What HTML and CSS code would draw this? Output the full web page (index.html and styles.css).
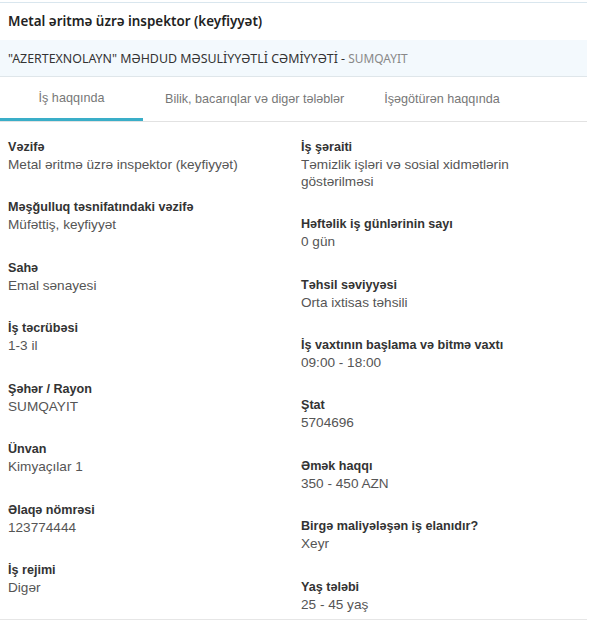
FILE: index.html
```html
<!DOCTYPE html>
<html lang="az">
<head>
<meta charset="utf-8">
<link rel="stylesheet" href="styles.css">
</head>
<body>
<div class="card">
  <div class="title">Metal əritmə üzrə inspektor (keyfiyyət)</div>
  <div class="company"><span class="company-name">"AZERTEXNOLAYN" MƏHDUD MƏSULİYYƏTLİ CƏMİYYƏTİ</span> - <span class="city">SUMQAYIT</span></div>
  <div class="tabs">
    <div class="tab tab-active">İş haqqında</div>
    <div class="tab tab-2">Bilik, bacarıqlar və digər tələblər</div>
    <div class="tab tab-3">İşəgötürən haqqında</div>
  </div>
  <div class="details">
    <div class="col">
      <div class="item"><div class="label">Vəzifə</div><div class="value">Metal əritmə üzrə inspektor (keyfiyyət)</div></div>
      <div class="item"><div class="label">Məşğulluq təsnifatındaki vəzifə</div><div class="value">Müfəttiş, keyfiyyət</div></div>
      <div class="item"><div class="label">Sahə</div><div class="value">Emal sənayesi</div></div>
      <div class="item"><div class="label">İş təcrübəsi</div><div class="value">1-3 il</div></div>
      <div class="item"><div class="label">Şəhər / Rayon</div><div class="value">SUMQAYIT</div></div>
      <div class="item"><div class="label">Ünvan</div><div class="value">Kimyaçılar 1</div></div>
      <div class="item"><div class="label">Əlaqə nömrəsi</div><div class="value">123774444</div></div>
      <div class="item"><div class="label">İş rejimi</div><div class="value">Digər</div></div>
    </div>
    <div class="col">
      <div class="item"><div class="label">İş şəraiti</div><div class="value">Təmizlik işləri və sosial xidmətlərin<br>göstərilməsi</div></div>
      <div class="item"><div class="label">Həftəlik iş günlərinin sayı</div><div class="value">0 gün</div></div>
      <div class="item"><div class="label">Təhsil səviyyəsi</div><div class="value">Orta ixtisas təhsili</div></div>
      <div class="item"><div class="label">İş vaxtının başlama və bitmə vaxtı</div><div class="value">09:00 - 18:00</div></div>
      <div class="item"><div class="label">Ştat</div><div class="value">5704696</div></div>
      <div class="item"><div class="label">Əmək haqqı</div><div class="value">350 - 450 AZN</div></div>
      <div class="item"><div class="label">Birgə maliyələşən iş elanıdır?</div><div class="value">Xeyr</div></div>
      <div class="item"><div class="label">Yaş tələbi</div><div class="value">25 - 45 yaş</div></div>
    </div>
  </div>
</div>
</body>
</html>
```
FILE: styles.css
```css
html, body {
  margin: 0;
  padding: 0;
  background: #fff;
}
.card {
  width: 587px;
  height: 618px;
  box-sizing: border-box;
  margin-top: 2px;
  border-top: 1px solid #d9e6ee;
  border-bottom: 1px solid #e6e6e6;
  font-family: "Liberation Sans", Arial, sans-serif;
  overflow: hidden;
}
.title {
  font-family: "Noto Sans", sans-serif;
  font-weight: 600;
  font-size: 13.4px;
  color: #222;
  height: 37px;
  line-height: 36px;
  padding-left: 8px;
}
.company {
  font-family: "Noto Sans", sans-serif;
  background: #f3f9fd;
  height: 36px;
  line-height: 36px;
  padding-left: 8px;
  font-size: 12.4px;
  color: #333;
  border-bottom: 1px solid #dfe6ea;
}
.company .city {
  color: #888;
  font-size: 11.9px;
}
.tabs {
  display: flex;
  height: 44px;
  border-bottom: 1px solid #e2e2e2;
  font-size: 12.6px;
  color: #777;
}
.tab {
  line-height: 44px;
  box-sizing: border-box;
}
.tab-active {
  width: 143px;
  text-align: center;
  border-bottom: 3px solid #3aaec8;
  line-height: 42px;
}
.tab-2 {
  padding-left: 22px;
}
.tab-3 {
  padding-left: 40px;
}
.details {
  display: grid;
  grid-template-columns: 293px 294px;
  padding-top: 15px;
}
.col {
  padding-left: 8px;
}
.item {
  margin-bottom: 23.63px;
}
.label {
  font-weight: bold;
  font-size: 12.6px;
  color: #333;
  line-height: 20px;
}
.value {
  font-size: 13.6px;
  color: #555;
  line-height: 16.8px;
}
```
